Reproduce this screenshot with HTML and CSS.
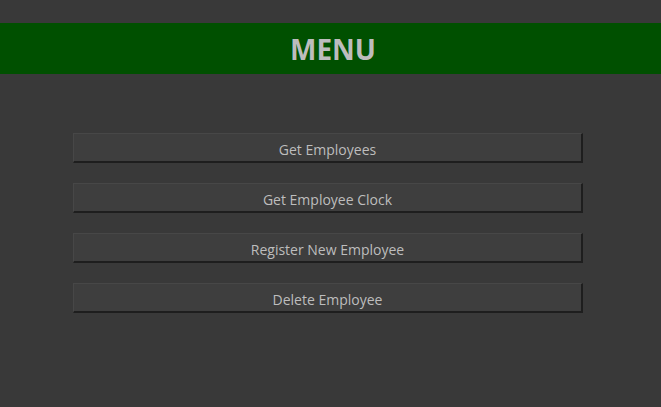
FILE: index.html
```html
<!DOCTYPE html>
<html>
<head>
<meta charset="utf-8">
<link rel="stylesheet" href="styles.css">
</head>
<body>
<header class="header"><h1 class="title">MENU</h1></header>
<nav class="menu">
  <button class="btn">Get Employees</button>
  <button class="btn">Get Employee Clock</button>
  <button class="btn">Register New Employee</button>
  <button class="btn">Delete Employee</button>
</nav>
</body>
</html>
```
FILE: styles.css
```css
html, body {
  margin: 0;
  padding: 0;
  background: #393939;
  height: 100%;
}
body {
  font-family: "Open Sans", "Noto Sans", sans-serif;
  color: #bdbdbd;
  padding-top: 23px;
  box-sizing: border-box;
}
.header {
  background: #005000;
  height: 51px;
  display: flex;
  align-items: center;
  justify-content: center;
}
.title {
  margin: 0;
  font-size: 28px;
  font-weight: 700;
  line-height: 1;
  padding: 1px 0 0 5px;
  color: #bdbdbd;
}
.menu {
  display: flex;
  flex-direction: column;
  gap: 20px;
  padding-top: 59px;
  padding-left: 73px;
  width: 510px;
}
.btn {
  height: 30px;
  box-sizing: border-box;
  background: #3e3e3e;
  border-style: solid;
  border-width: 1px 2px 2px 1px;
  border-color: #474747 #1e1e1e #1e1e1e #474747;
  color: #bdbdbd;
  font-family: "Open Sans", "Noto Sans", sans-serif;
  font-size: 14px;
  padding: 3px 0 0 0;
  cursor: pointer;
}
```
